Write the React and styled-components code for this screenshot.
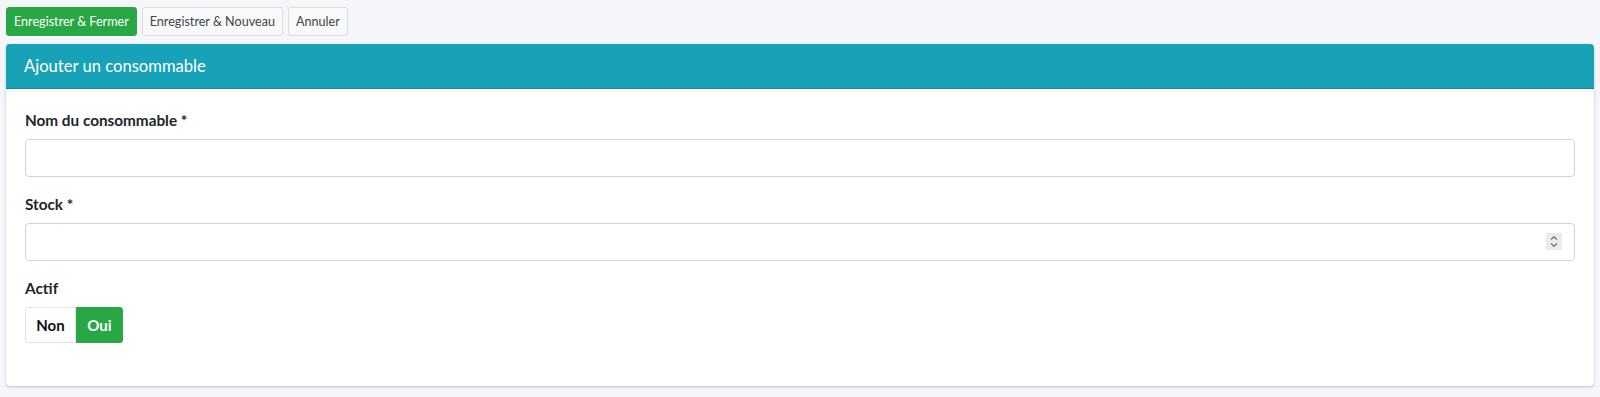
import styled, { createGlobalStyle } from "styled-components";

const GlobalStyle = createGlobalStyle`
  body {
    margin: 0;
    background: #f4f6f9;
    font-family: "Lato", "Noto Sans", sans-serif;
    color: #212529;
  }
`;

const Page = styled.div`
  padding: 7px 6px 10px 6px;
`;

const Toolbar = styled.div`
  display: flex;
  gap: 5px;
  margin-bottom: 8px;
`;

const Button = styled.button`
  height: 29px;
  padding: 0 7px;
  font-family: inherit;
  font-size: 12.6px;
  border-radius: 3px;
  border: 1px solid ${(p) => (p.primary ? "#28a745" : "#dcdcdc")};
  background: ${(p) => (p.primary ? "#28a745" : "#f8f9fa")};
  color: ${(p) => (p.primary ? "#fff" : "#444")};
  cursor: pointer;
`;

const Card = styled.div`
  background: #fff;
  border-radius: 4px;
  box-shadow: 0 0 1px rgba(0, 0, 0, 0.125), 0 1px 3px rgba(0, 0, 0, 0.2);
  overflow: hidden;
`;

const CardHeader = styled.div`
  background: #17a2b8;
  height: 44px;
  border-bottom: 1px solid #138a9c;
  display: flex;
  align-items: center;
  padding: 0 18px;
  color: #fff;
  font-size: 16.6px;
`;

const CardBody = styled.div`
  padding: 20px 19px 43px 19px;
`;

const FormGroup = styled.div`
  margin-bottom: ${(p) => (p.last ? "0" : "16px")};
`;

const Label = styled.label`
  display: block;
  font-weight: 700;
  font-size: 15.3px;
  line-height: 22px;
  margin-bottom: 8px;
`;

const InputWrap = styled.div`
  position: relative;
`;

const Input = styled.input`
  box-sizing: border-box;
  width: 100%;
  height: 38px;
  border: 1px solid #ced4da;
  border-radius: 4px;
  padding: 6px 12px;
  font-family: inherit;
  font-size: 15px;
  outline: none;
`;

const Spinner = styled.span`
  position: absolute;
  right: 13px;
  top: 10px;
  width: 16px;
  height: 17px;
  background: #ebebef;
  display: flex;
  align-items: center;
  justify-content: center;
`;

const Toggle = styled.div`
  display: inline-flex;
  height: 36px;
`;

const ToggleOption = styled.span`
  display: flex;
  align-items: center;
  justify-content: center;
  box-sizing: border-box;
  width: ${(p) => p.w}px;
  font-weight: 700;
  font-size: 15px;
  background: ${(p) => (p.active ? "#28a745" : "#fff")};
  color: ${(p) => (p.active ? "#fff" : "#111")};
  border: 1px solid ${(p) => (p.active ? "#28a745" : "#e3e3e3")};
  border-radius: ${(p) => (p.active ? "0 3px 3px 0" : "3px 0 0 3px")};
`;

const App = () => {
  return (
    <Page>
      <GlobalStyle />
      <Toolbar>
        <Button primary>Enregistrer &amp; Fermer</Button>
        <Button>Enregistrer &amp; Nouveau</Button>
        <Button>Annuler</Button>
      </Toolbar>
      <Card>
        <CardHeader>Ajouter un consommable</CardHeader>
        <CardBody>
          <FormGroup>
            <Label>Nom du consommable *</Label>
            <Input type="text" />
          </FormGroup>
          <FormGroup>
            <Label>Stock *</Label>
            <InputWrap>
              <Input type="text" />
              <Spinner>
                <svg width="10" height="13" viewBox="0 0 10 13" fill="none" stroke="#6b6b70" strokeWidth="1.1">
                  <path d="M2 4.5 L5 1.8 L8 4.5" />
                  <path d="M2 8.5 L5 11.2 L8 8.5" />
                </svg>
              </Spinner>
            </InputWrap>
          </FormGroup>
          <FormGroup last>
            <Label>Actif</Label>
            <Toggle>
              <ToggleOption w={51}>Non</ToggleOption>
              <ToggleOption w={47} active>Oui</ToggleOption>
            </Toggle>
          </FormGroup>
        </CardBody>
      </Card>
    </Page>
  );
};

export default App;
